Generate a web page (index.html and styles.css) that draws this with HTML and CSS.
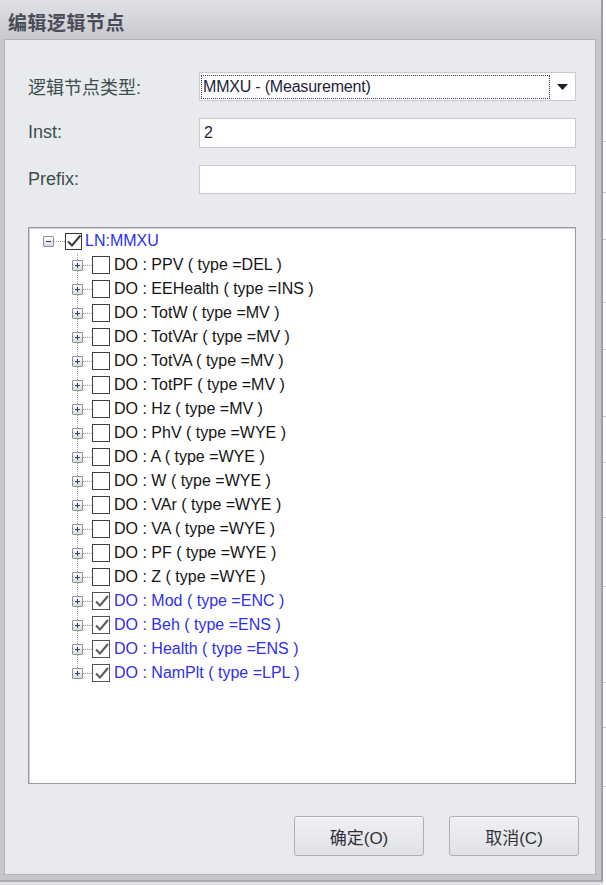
FILE: index.html
```html
<!DOCTYPE html>
<html lang="zh">
<head>
<meta charset="utf-8">
<title>编辑逻辑节点</title>
<link rel="stylesheet" href="styles.css">
</head>
<body>
<div class="screen">
  <div class="dialog">
    <div class="titlebar">编辑逻辑节点</div>
    <div class="panel">
      <div class="form">
        <div class="label">逻辑节点类型:</div>
        <div class="combo">
          <span class="focus">MMXU - (Measurement)</span>
          <span class="arrow"><svg width="11" height="6" viewBox="0 0 11 6"><path d="M0 0H11L5.5 6Z" fill="#1e1e2a"/></svg></span>
        </div>
        <div class="label">Inst:</div>
        <div class="input tall">2</div>
        <div class="label">Prefix:</div>
        <div class="input"></div>
      </div>

      <div class="tree">
        <div class="row root">
          <span class="stem"><span class="exp"><svg width="9" height="9" viewBox="0 0 9 9"><path d="M2 4.5H7" stroke="#2c3a78" stroke-width="1"/></svg></span></span>
          <span class="hl"></span>
          <span class="cb on dark"><svg width="15" height="15" viewBox="0 0 15 15"><path d="M2 7.5L6 11.5L14.5 1.5" fill="none" stroke="#3a3a3a" stroke-width="2"/></svg></span>
          <span class="txt blue">LN:MMXU</span>
        </div>

        <div class="row child"><span class="stem"><span class="vl"></span><span class="exp"><svg width="9" height="9" viewBox="0 0 9 9"><path d="M2 4.5H7M4.5 2V7" stroke="#2c3a78"/></svg></span></span><span class="hl"></span><span class="cb"></span><span class="txt">DO : PPV ( type =DEL )</span></div>
        <div class="row child"><span class="stem"><span class="vl"></span><span class="exp"><svg width="9" height="9" viewBox="0 0 9 9"><path d="M2 4.5H7M4.5 2V7" stroke="#2c3a78"/></svg></span></span><span class="hl"></span><span class="cb"></span><span class="txt">DO : EEHealth ( type =INS )</span></div>
        <div class="row child"><span class="stem"><span class="vl"></span><span class="exp"><svg width="9" height="9" viewBox="0 0 9 9"><path d="M2 4.5H7M4.5 2V7" stroke="#2c3a78"/></svg></span></span><span class="hl"></span><span class="cb"></span><span class="txt">DO : TotW ( type =MV )</span></div>
        <div class="row child"><span class="stem"><span class="vl"></span><span class="exp"><svg width="9" height="9" viewBox="0 0 9 9"><path d="M2 4.5H7M4.5 2V7" stroke="#2c3a78"/></svg></span></span><span class="hl"></span><span class="cb"></span><span class="txt">DO : TotVAr ( type =MV )</span></div>
        <div class="row child"><span class="stem"><span class="vl"></span><span class="exp"><svg width="9" height="9" viewBox="0 0 9 9"><path d="M2 4.5H7M4.5 2V7" stroke="#2c3a78"/></svg></span></span><span class="hl"></span><span class="cb"></span><span class="txt">DO : TotVA ( type =MV )</span></div>
        <div class="row child"><span class="stem"><span class="vl"></span><span class="exp"><svg width="9" height="9" viewBox="0 0 9 9"><path d="M2 4.5H7M4.5 2V7" stroke="#2c3a78"/></svg></span></span><span class="hl"></span><span class="cb"></span><span class="txt">DO : TotPF ( type =MV )</span></div>
        <div class="row child"><span class="stem"><span class="vl"></span><span class="exp"><svg width="9" height="9" viewBox="0 0 9 9"><path d="M2 4.5H7M4.5 2V7" stroke="#2c3a78"/></svg></span></span><span class="hl"></span><span class="cb"></span><span class="txt">DO : Hz ( type =MV )</span></div>
        <div class="row child"><span class="stem"><span class="vl"></span><span class="exp"><svg width="9" height="9" viewBox="0 0 9 9"><path d="M2 4.5H7M4.5 2V7" stroke="#2c3a78"/></svg></span></span><span class="hl"></span><span class="cb"></span><span class="txt">DO : PhV ( type =WYE )</span></div>
        <div class="row child"><span class="stem"><span class="vl"></span><span class="exp"><svg width="9" height="9" viewBox="0 0 9 9"><path d="M2 4.5H7M4.5 2V7" stroke="#2c3a78"/></svg></span></span><span class="hl"></span><span class="cb"></span><span class="txt">DO : A ( type =WYE )</span></div>
        <div class="row child"><span class="stem"><span class="vl"></span><span class="exp"><svg width="9" height="9" viewBox="0 0 9 9"><path d="M2 4.5H7M4.5 2V7" stroke="#2c3a78"/></svg></span></span><span class="hl"></span><span class="cb"></span><span class="txt">DO : W ( type =WYE )</span></div>
        <div class="row child"><span class="stem"><span class="vl"></span><span class="exp"><svg width="9" height="9" viewBox="0 0 9 9"><path d="M2 4.5H7M4.5 2V7" stroke="#2c3a78"/></svg></span></span><span class="hl"></span><span class="cb"></span><span class="txt">DO : VAr ( type =WYE )</span></div>
        <div class="row child"><span class="stem"><span class="vl"></span><span class="exp"><svg width="9" height="9" viewBox="0 0 9 9"><path d="M2 4.5H7M4.5 2V7" stroke="#2c3a78"/></svg></span></span><span class="hl"></span><span class="cb"></span><span class="txt">DO : VA ( type =WYE )</span></div>
        <div class="row child"><span class="stem"><span class="vl"></span><span class="exp"><svg width="9" height="9" viewBox="0 0 9 9"><path d="M2 4.5H7M4.5 2V7" stroke="#2c3a78"/></svg></span></span><span class="hl"></span><span class="cb"></span><span class="txt">DO : PF ( type =WYE )</span></div>
        <div class="row child"><span class="stem"><span class="vl"></span><span class="exp"><svg width="9" height="9" viewBox="0 0 9 9"><path d="M2 4.5H7M4.5 2V7" stroke="#2c3a78"/></svg></span></span><span class="hl"></span><span class="cb"></span><span class="txt">DO : Z ( type =WYE )</span></div>
        <div class="row child"><span class="stem"><span class="vl"></span><span class="exp"><svg width="9" height="9" viewBox="0 0 9 9"><path d="M2 4.5H7M4.5 2V7" stroke="#2c3a78"/></svg></span></span><span class="hl"></span><span class="cb on"><svg width="15" height="15" viewBox="0 0 15 15"><path d="M2 7.5L6 11.5L14 2" fill="none" stroke="#5a5a5a" stroke-width="2"/></svg></span><span class="txt blue">DO : Mod ( type =ENC )</span></div>
        <div class="row child"><span class="stem"><span class="vl"></span><span class="exp"><svg width="9" height="9" viewBox="0 0 9 9"><path d="M2 4.5H7M4.5 2V7" stroke="#2c3a78"/></svg></span></span><span class="hl"></span><span class="cb on"><svg width="15" height="15" viewBox="0 0 15 15"><path d="M2 7.5L6 11.5L14 2" fill="none" stroke="#5a5a5a" stroke-width="2"/></svg></span><span class="txt blue">DO : Beh ( type =ENS )</span></div>
        <div class="row child"><span class="stem"><span class="vl"></span><span class="exp"><svg width="9" height="9" viewBox="0 0 9 9"><path d="M2 4.5H7M4.5 2V7" stroke="#2c3a78"/></svg></span></span><span class="hl"></span><span class="cb on"><svg width="15" height="15" viewBox="0 0 15 15"><path d="M2 7.5L6 11.5L14 2" fill="none" stroke="#5a5a5a" stroke-width="2"/></svg></span><span class="txt blue">DO : Health ( type =ENS )</span></div>
        <div class="row child last"><span class="stem"><span class="vl"></span><span class="exp"><svg width="9" height="9" viewBox="0 0 9 9"><path d="M2 4.5H7M4.5 2V7" stroke="#2c3a78"/></svg></span></span><span class="hl"></span><span class="cb on"><svg width="15" height="15" viewBox="0 0 15 15"><path d="M2 7.5L6 11.5L14 2" fill="none" stroke="#5a5a5a" stroke-width="2"/></svg></span><span class="txt blue">DO : NamPlt ( type =LPL )</span></div>
      </div>

      <div class="buttons">
        <button class="btn">确定(O)</button>
        <button class="btn">取消(C)</button>
      </div>
    </div>
  </div>
  <div class="side">
    <div class="seg s1"></div>
    <div class="seg s2"></div>
    <div class="seg s3"></div>
    <div class="seg s4"></div>
    <div class="seg s5"></div>
    <div class="seg s6"></div>
    <div class="seg s7"></div>
    <div class="seg s8"></div>
    <div class="seg s9"></div>
    <div class="seg s10"></div>
    <div class="seg s11"></div>
    <div class="seg s12"></div>
  </div>
</div>
</body>
</html>
```

FILE: styles.css
```css
* { box-sizing: border-box; }

html, body {
  margin: 0;
  padding: 0;
}

body {
  width: 606px;
  height: 885px;
  background: #e2e2e6;
  font-family: "Liberation Sans", "Noto Sans CJK SC", sans-serif;
  overflow: hidden;
}

.screen {
  display: flex;
  width: 606px;
  height: 885px;
}

.dialog {
  width: 603px;
  height: 882px;
  flex: none;
  display: flex;
  flex-direction: column;
  background: #c5c6cc;
  border-right: 2px solid #9c9da6;
  border-bottom: 2px solid #a9aab2;
}

.titlebar {
  height: 39px;
  flex: none;
  display: flex;
  align-items: center;
  padding: 3px 0 0 8px;
  background: linear-gradient(#e0e1e6, #c8c9cf);
  color: #4b4b58;
  font-family: "Noto Sans CJK SC", sans-serif;
  font-weight: 700;
  font-size: 19px;
  letter-spacing: 0.5px;
}

.panel {
  margin: 0 5px 5px 4px;
  flex: 1;
  background: #e9eaee;
  border: 1px solid #b2b3ba;
  display: flex;
  flex-direction: column;
}

/* form */
.form {
  margin: 32px 0 0 23px;
  display: grid;
  grid-template-columns: 171px 377px;
  grid-template-rows: 29px 30px 29px;
  row-gap: 17px;
}

.label {
  display: flex;
  align-items: center;
  font-size: 18px;
  color: #3b4d4d;
  padding-bottom: 1px;
}

.combo, .input {
  background: #fff;
  border: 1px solid #c9cbd1;
}

.combo {
  display: flex;
  align-items: center;
  padding-left: 1px;
}

.focus {
  width: 349px;
  height: 24px;
  border: 1px dotted #3a3a3a;
  display: flex;
  align-items: center;
  padding-left: 1px;
  font-size: 16px;
  color: #1d1d38;
  letter-spacing: -0.2px;
}

.arrow {
  flex: 1;
  display: flex;
  justify-content: center;
  padding-top: 1px;
}

.input {
  display: flex;
  align-items: center;
  padding-left: 4px;
  font-size: 16px;
  color: #1d1d38;
}

/* tree */
.tree {
  margin: 33px 0 0 23px;
  width: 548px;
  height: 557px;
  background: #fff;
  border: 1px solid #999aa0;
  box-shadow: inset 1px 1px 0 #cfd0d4;
  padding-top: 1px;
  display: flex;
  flex-direction: column;
}

.row {
  height: 24px;
  flex: none;
  display: flex;
  align-items: center;
  font-size: 16px;
  color: #141414;
}

.row.root { padding-left: 14px; }
.row.child { padding-left: 43px; }

.stem {
  width: 11px;
  height: 24px;
  display: grid;
  align-items: center;
  justify-items: center;
}

.stem > * { grid-area: 1 / 1; }

.vl {
  width: 1px;
  height: 24px;
  align-self: start;
  background-image: linear-gradient(to bottom, #9a9a9a 50%, transparent 50%);
  background-size: 1px 2px;
}

.last .vl { height: 12px; }

.exp {
  width: 11px;
  height: 11px;
  border: 1px solid #8d8f99;
  border-radius: 1px;
  background: linear-gradient(#ffffff, #d9dae0);
  display: flex;
  align-items: center;
  justify-content: center;
}

.exp svg { display: block; }

.hl {
  height: 1px;
  background-image: linear-gradient(to right, #9a9a9a 50%, transparent 50%);
  background-size: 2px 1px;
}

.root .hl { width: 11px; }
.child .hl { width: 9px; }

.cb {
  width: 17px;
  height: 17px;
  flex: none;
  border: 1px solid #404040;
  background: #fff;
  display: flex;
  align-items: center;
  justify-content: center;
}

.child .cb {
  width: 18px;
  height: 18px;
}

.cb.on { border-color: #555; }
.cb.dark { border-color: #333; }
.cb svg { display: block; }

.txt {
  white-space: nowrap;
  padding-left: 4px;
}

.root .txt { padding-left: 3px; }

.txt.blue { color: #3030e6; }

/* buttons */
.buttons {
  margin-top: 32px;
  display: flex;
  justify-content: flex-end;
  gap: 25px;
  padding-right: 16px;
}

.btn {
  width: 130px;
  height: 40px;
  border: 1px solid #aeafb5;
  border-radius: 3px;
  background: linear-gradient(#f0f0f3, #e1e2e6);
  box-shadow: inset 0 1px 0 #fafafc;
  font-family: "Liberation Sans", "Noto Sans CJK SC", sans-serif;
  font-size: 17px;
  color: #303038;
  padding: 0;
}

/* window behind the dialog */
.side {
  width: 3px;
  height: 885px;
  background: #fff;
  display: flex;
  flex-direction: column;
}

.seg {
  flex: none;
  border-bottom: 1px solid #c8c9ce;
}

.s1 { height: 142px; }
.s2 { height: 51px; }
.s3 { height: 47px; }
.s4 { height: 63px; }
.s5 { height: 47px; }
.s6 { height: 67px; }
.s7 { height: 46px; }
.s8 { height: 55px; }
.s9 { height: 69px; }
.s10 { height: 96px; }
.s11 { height: 45px; }
.s12 { height: 59px; }
```
